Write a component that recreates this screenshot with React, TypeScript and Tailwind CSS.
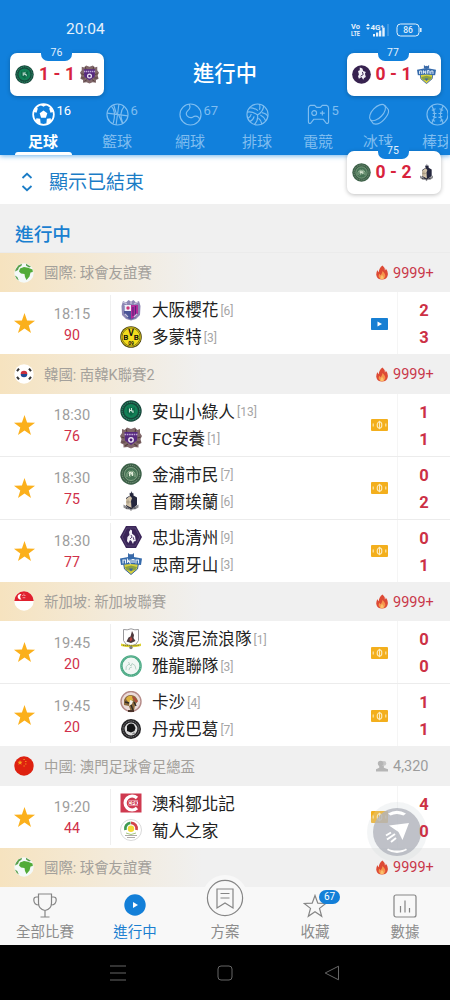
import type { ReactNode } from "react";

// ─── Club crests ──────────────────────────────────────────────────────────────
const CRESTS: Record<string, ReactNode> = {
  cerezo: (
    <>
      <path d="M3 2l3 1.500L8.500 1 11 2.500 13.500 1 16 3.500 19 2l1.500 5-.5 9-4 4-5 1.500L6 20l-4-4-.5-9z" fill="#8d87b4" />
      <path d="M4 7h14v7l-3 5-4 1.500-4-1.500-3-5z" fill="#4b5597" />
      <path d="M11 6h7v8l-3 4-4 2z" fill="#b52c9b" />
      <path d="M13 8v9M15.500 7v9" stroke="#5b237f" strokeWidth="1.200" />
      <rect x="4.500" y="6" width="6.500" height="6" fill="#eef0fa" />
      <circle cx="8" cy="9" r="1.700" fill="#cf3777" />
      <path d="M3 3l4 2M18 3l-4 2M11 2v3M5 15l3 3M17 15l-3 3" stroke="#c9c6dd" strokeWidth="1.200" />
    </>
  ),
  bvb: (
    <>
      <circle cx="11" cy="11" r="10.800" fill="#4a4210" />
      <circle cx="11" cy="11" r="10" fill="#f3dc1d" />
      <circle cx="11" cy="11" r="9" fill="none" stroke="#3b350d" strokeWidth=".6" />
      <text x="5.700" y="13.800" textAnchor="middle" fontSize="8" fontWeight="700" fill="#111">B</text>
      <text x="11" y="9.800" textAnchor="middle" fontSize="8.500" fontWeight="700" fill="#111">V</text>
      <text x="16.300" y="13.800" textAnchor="middle" fontSize="8" fontWeight="700" fill="#111">B</text>
      <text x="11" y="19" textAnchor="middle" fontSize="5" fontWeight="700" fill="#111">09</text>
    </>
  ),
  ansan: (
    <>
      <circle cx="11" cy="11" r="10.700" fill="#17453a" />
      <circle cx="11" cy="11" r="8.900" fill="none" stroke="#2a8a66" strokeWidth="1.200" strokeDasharray="1.500 .7" />
      <circle cx="11" cy="11" r="7" fill="#128056" />
      <path d="M7 7l2.500 1.500L11 6.500l1.500 2L15 7v5.500L11 16l-4-3.500z" fill="#0e6a49" />
      <path d="M9.500 8.500v4M11.500 8v3h1.500v2M9.500 10.500h2" fill="none" stroke="#cfe9dc" strokeWidth="1.100" />
    </>
  ),
  anyang: (
    <>
      <path d="M2 2l3 1 2-2.500 4 1.500 4-1.500L17 3l3-1v4l2 3-1.500 3 1 4-3 1.500v3l-4-.5L11 21.500 7.500 20l-4 .5v-3L.500 16l1-4L0 9l2-3z" fill="#80676a" />
      <path d="M1.500 10l3 1M20.500 10l-3 1M1.500 15l4 0M20.500 15h-4M5 19l3-2M17 19l-3-2M6 2l1 3M16 2l-1 3" stroke="#54403b" strokeWidth="1.100" />
      <path d="M4.500 5h13l-.5 8.500-6 4.500-6-4.500z" fill="#56297f" />
      <path d="M4.500 7.500h13" stroke="#bfa6d8" strokeWidth="1.500" strokeDasharray="1.600 .7" />
      <circle cx="11" cy="12.800" r="2.900" fill="#eee8f4" />
      <path d="M11 11.300l1.500 1-.5 2h-2l-.5-2z" fill="#4d2378" />
    </>
  ),
  gimpo: (
    <>
      <circle cx="11" cy="11" r="10.700" fill="#3c6048" />
      <circle cx="11" cy="11" r="8.700" fill="none" stroke="#88a088" strokeWidth=".9" strokeDasharray="1.200 1" />
      <circle cx="11" cy="11" r="6.500" fill="#467355" stroke="#8fad8f" strokeWidth=".8" />
      <path d="M7 14q-1-4 2-6 2 1 4 0 3 2 2 6M8 10l6 2M14 9.500l-5 5" fill="none" stroke="#a9c3a4" strokeWidth=".8" />
      <path d="M9.500 9v4M9.500 9.500h2v1.500h-2M12.500 9v4" fill="none" stroke="#e2ecda" strokeWidth="1" />
    </>
  ),
  eland: (
    <>
      <path d="M9.500 4l.5-1.500.8 1 .7-2.500.7 2.500.8-1 .5 1.500v1.500L17 7.500V15l-6 5-5-4V8l4-2.500z" fill="#25273d" />
      <path d="M6 9l4-3 2 2-1 3 .5 7-5.500-3z" fill="#d4c5aa" />
      <path d="M8 9.500v5M6 12h5" stroke="#8c7f6c" strokeWidth=".6" />
      <path d="M3.500 14.500l3 1.800 4.500 3 4.500-3 3-1.800v3l-3 1.800-3 .2-1.500 1.500-1.500-1.500-3-.2-3-1.800z" fill="#8d8d90" />
      <path d="M6 18h10" stroke="#34343c" strokeWidth="1.100" strokeDasharray="1.300 .6" />
    </>
  ),
  chungbuk: (
    <>
      <path d="M6 0h10l6 11-6 11H6L0 11z" fill="#3a2558" />
      <path d="M6.800 2h8.400l4.600 9-4.600 9H6.800L2.200 11z" fill="none" stroke="#5c4a78" strokeWidth=".7" />
      <path d="M10.500 3.500l1.500 1v3l3 2.500.8 5-2 .5-.8 2.500-1.500-3-1.500-1-1.500 3-1.500-2 .5-4 2-2-.5-3z" fill="#f4f2f8" />
      <path d="M11 9l1 2-2 2M13 11l1 3" stroke="#3a2558" strokeWidth=".8" fill="none" />
    </>
  ),
  chungbukRound: (
    <>
      <circle cx="11" cy="11" r="10.800" fill="#37224f" />
      <path d="M9 3l3 1 1 3 3 1-1 2 1 4-2 1-1 2-2-3-3 2-1-3 1-2-1-4 2-1z" fill="#f4f2f8" />
      <path d="M12 8l1 3-3 2" stroke="#37224f" strokeWidth="1.100" fill="none" />
    </>
  ),
  asan: (
    <>
      <path d="M8 0l2 1.500 1-.5 1 .5L14 0v4H8z" fill="#3b6aa8" />
      <path d="M3.500 10h15l-1 6-6.500 5.500L4.500 16z" fill="#d9d23c" stroke="#3864a0" strokeWidth="1" />
      <path d="M5 14l6-1.500 6 1.500-1.500 3L11 18l-4.500-1z" fill="#8aa043" />
      <path d="M9 15.500l4 0-2 3z" fill="#3864a0" />
      <path d="M0 5.500L11 3.500l11 2-1 6.500-10-1-10 1z" fill="#356aab" />
      <path d="M3 10.500V7h2.500v3.500M7.500 10V6.500L10 10V6.500M12 10V6.500h2V10M16 10.500V7h2.500v3.500" fill="none" stroke="#e9f1fa" strokeWidth="1.100" />
    </>
  ),
  tampines: (
    <>
      <path d="M3.500 1.500Q7 2.500 11 .8q4 1.700 7.500.7v11q-1 4-7.500 6-6.500-2-7.500-6z" fill="#fff" stroke="#9a9a9d" strokeWidth="1" />
      <path d="M12 3l2 4-.5 3 2 3-4.500 2-4.500-1.500 2-4 2-1z" fill="#4d3a3d" />
      <path d="M11 8.500l1.500 3-2 2-1-2z" fill="#b9453f" />
      <path d="M1 15.500q10 3 20 0V18q-10 2.500-20 0z" fill="#ddd231" />
      <path d="M3 17.300h16" stroke="#6b6722" strokeWidth=".9" strokeDasharray="1.200 .7" />
      <circle cx="11" cy="19.500" r="1.700" fill="#80807a" />
    </>
  ),
  geylang: (
    <>
      <circle cx="11" cy="11" r="9.600" fill="#f1f7f4" stroke="#49a883" strokeWidth="2.400" />
      <circle cx="11" cy="11" r="9.700" fill="none" stroke="#8fd0b5" strokeWidth=".7" strokeDasharray="1 1" />
      <path d="M6 15q-1-4 3-6l2 2 1-2.500q4 1 4 6M9 15q0-3 3-3M8 7.500l2 1" fill="none" stroke="#a9c9bb" strokeWidth=".8" />
    </>
  ),
  hougang: (
    <>
      <circle cx="11" cy="10.500" r="10" fill="#ecdcda" stroke="#b58b88" strokeWidth="1.400" />
      <path d="M4 9q2-5 7-5 5 0 7 6l-3 4-1 6-3 1-2-6-5-1z" fill="#8c6a3c" />
      <path d="M6 8q2-4 6-3l1 4-4 3z" fill="#ddb13f" />
      <path d="M10 9l3 1-1 3-3 2z" fill="#f3efe9" />
      <path d="M5 11l4 1M14 11l2 4M11 14l2 5" stroke="#2f2a26" strokeWidth="1.400" fill="none" />
      <path d="M13 6l4 5" stroke="#b6473c" strokeWidth="1.800" />
      <path d="M8 20h6" stroke="#4a3229" strokeWidth="2" />
    </>
  ),
  tanjong: (
    <>
      <circle cx="11" cy="11" r="10" fill="#232224" />
      <circle cx="11" cy="11" r="8" fill="none" stroke="#7c7c7e" strokeWidth="1" strokeDasharray="1.500 .8" />
      <circle cx="11" cy="11" r="6.400" fill="#dcdcdc" />
      <path d="M7 8q3-4 7-1.500l1.500 3.500-1 3-3.500 1.500L7 13z" fill="#151516" />
      <path d="M12 16l3-1M13.500 14.500l1 2" stroke="#888" strokeWidth="1" />
    </>
  ),
  cpk: (
    <>
      <rect x=".5" y="1.500" width="21" height="19" fill="#cf3a50" />
      <path d="M17 6A7 7 0 1 0 17 16" fill="none" stroke="#fff" strokeWidth="3.200" />
      <path d="M8.500 11h9.500" stroke="#fff" strokeWidth="4.800" />
      <text x="13" y="12.900" textAnchor="middle" fontSize="5" fontWeight="700" fill="#cf3048">CPK</text>
    </>
  ),
  casa: (
    <>
      <circle cx="11" cy="11" r="10.500" fill="#fff" stroke="#cfcfcf" strokeWidth=".8" />
      <path d="M5.500 11A5.700 5.700 0 0 1 10.500 3.800" fill="none" stroke="#3f9a52" strokeWidth="2.800" />
      <path d="M11 3.800a5.700 5.700 0 0 1 5.500 7.200" fill="none" stroke="#d2434a" strokeWidth="2.800" />
      <circle cx="11" cy="9.800" r="3.200" fill="#f2d936" />
      <path d="M6 14q5 3 10 0" fill="none" stroke="#9cc06f" strokeWidth=".9" />
      <path d="M5 16.500h12M7 18.500h8" stroke="#8d8784" strokeWidth=".7" />
    </>
  ),
};

function Crest({ id, className }: { id: string; className: string }) {
  return (
    <svg viewBox="0 0 22 22" className={className}>
      {CRESTS[id]}
    </svg>
  );
}

// ─── Flags ────────────────────────────────────────────────────────────────────
const FLAGS: Record<string, ReactNode> = {
  globe: (
    <>
      <circle cx="10" cy="10" r="9.700" fill="#f4f9f8" />
      <path d="M6 5.500l4-1.500 4 .8 4.500 1.700.3 2.500-2.300.5-1 4-3 3.500-1.500-3-.5-3-3.500-.5-2-2z" fill="#52ab38" />
      <path d="M1.800 6l2.500-3.500L8 .7l-.5 2L5 4.500 4 7 1 8.500zM12 .8l5 3-2 .7-3-2zM.8 12.500l2.500 1.500 1.500 3.500-2-1.500z" fill="#5ba04d" />
    </>
  ),
  korea: (
    <>
      <circle cx="10" cy="10" r="9.700" fill="#fff" />
      <path d="M6.700 10a3.300 3.300 0 0 1 6.600 0z" fill="#c9303e" />
      <path d="M6.700 10a3.300 3.300 0 0 0 6.600 0z" fill="#1f4a94" />
      <path d="M3 7.200l2-2.600M17 7.200l-2-2.600M3 12.800l2 2.600M17 12.800l-2 2.600" stroke="#333" strokeWidth="2" />
    </>
  ),
  singapore: (
    <>
      <circle cx="10" cy="10" r="9.700" fill="#fff" />
      <path d="M.3 10a9.700 9.700 0 0 1 19.400 0z" fill="#e0202d" />
      <path d="M7.500 3.200a2.800 2.800 0 1 0 0 5.200 3.200 3.200 0 0 1 0-5.200z" fill="#fff" />
      <path d="M8.500 4.500h.8M10.500 4.500h.8M9.500 3.200h.8M8.800 6.700h.8M10.400 6.700h.8" stroke="#fff" strokeWidth=".9" />
    </>
  ),
  china: (
    <>
      <circle cx="10" cy="10" r="9.700" fill="#de2110" />
      <path d="M6 4l.7 1.700 1.800.1-1.400 1.200.5 1.800L6 7.800l-1.600 1 .5-1.800-1.400-1.200 1.800-.1z" fill="#f6a21d" />
      <path d="M9.500 3.500h1.200M11.200 5.500h1.200M11.200 8h1.200M9.500 10h1.200" stroke="#f6a21d" strokeWidth="1.100" />
    </>
  ),
};

// ─── Small icons ──────────────────────────────────────────────────────────────
function Flame() {
  return (
    <svg viewBox="0 0 12 15" className="h-[15px] w-3">
      <path d="M6.500.500q2.800 2.500 2.300 5 1-.5 1-2 2.500 3 2 6.500Q11 14.500 6 14.500T.300 10Q0 7.500 1.500 5q.2 1.500 1.200 2.200Q3 3 6.500.500z" fill="#dd4a35" />
      <path d="M6.500 6Q9.800 9 9.300 11.500 8.500 14.300 6 14.300T2.600 11.500Q2.500 10 3.500 8.800q.4 1 1.200 1.400Q6.300 8.500 6.500 6z" fill="#f5954c" />
      <path d="M6 10q2 1.800 1.700 3-.5 1.200-1.700 1.200T4.400 13Q4.500 11.500 6 10z" fill="#fbc06a" />
    </svg>
  );
}

function Viewers() {
  return (
    <svg viewBox="0 0 13 13" className="h-3 w-3 fill-[#b5b5b5]">
      <circle cx="8.500" cy="3.700" r="2.600" opacity=".7" />
      <circle cx="5" cy="3.700" r="3" />
      <path d="M3.500 6h5v2.500L13 10v2.500H0V10l3.500-1.500z" />
    </svg>
  );
}

function Media({ kind }: { kind: "video" | "ticket" }) {
  if (kind === "video") {
    return (
      <svg viewBox="0 0 17 12" className="h-3 w-[17px]">
        <rect width="17" height="12" rx=".8" fill="#177fd3" />
        <path d="M6.500 3.500l4.500 2.500-4.500 2.500z" fill="#fff" />
      </svg>
    );
  }
  return (
    <svg viewBox="0 0 17 12" className="h-3 w-[17px]">
      <rect width="17" height="12" rx="1" fill="#f3af1d" />
      <ellipse cx="8.500" cy="6" rx="2.300" ry="3.200" fill="none" stroke="#fdebbd" strokeWidth="1.100" />
      <path d="M8.500 1.800v8.400" stroke="#fdebbd" strokeWidth="1" />
      <path d="M2.200 4.500v3M14.800 4.500v3" stroke="#fdebbd" strokeWidth="1.100" />
    </svg>
  );
}

// ─── Sport tabs ───────────────────────────────────────────────────────────────
const SPORTS: { label: string; count?: number; width: string; icon: ReactNode }[] = [
  {
    label: "足球", count: 16, width: "w-[86px]",
    icon: (
      <>
        <circle cx="12" cy="12" r="10.800" strokeWidth="1.800" />
        <path d="M12 7.800l4 2.900-1.500 4.700h-5L8 10.700zM8.500 1.800L12 4l3.500-2.200zM1.500 9l3.200 1.200L6 6 5 3.800zM22.500 9l-3.200 1.200L18 6l1-2.200zM4 19.500l.5-3.500 4 .5.5 4.500-1 1zM20 19.500l-.5-3.500-4 .5-.5 4.500 1 1z" fill="currentColor" stroke="none" />
      </>
    ),
  },
  {
    label: "籃球", count: 6, width: "w-[62px]",
    icon: (
      <>
        <circle cx="12" cy="12" r="11" />
        <path d="M13.500 1L10.500 23M1.200 10.500Q12 12 22.800 13.500M5.500 3.300q5.500 5 2 18M19 3.500q-6 7-1.500 17.500M8 1.800l3 10M13 12l4 9" />
      </>
    ),
  },
  {
    label: "網球", count: 67, width: "w-[84px]",
    icon: (
      <>
        <circle cx="12" cy="12" r="11" />
        <path d="M10.500 1.200q2.500 4-1.500 7-2.500 2.500-.5 5.300 2.300 2.500 5.500 1.500 3.500-2.500 6.500 0 1 1 .8 2" />
      </>
    ),
  },
  {
    label: "排球", width: "w-[50px]",
    icon: (
      <>
        <circle cx="12" cy="12" r="11" />
        <path d="M12 12.500Q7 8.500 1.200 9.500M12 12.500Q18 9 18.500 3M12 12.500q1 6-3.500 10.200M12.500 8Q9 5 3.500 5M14 7q1-3 0-5.800M16.500 10q5 1 6.300 4M15 12.500q4 2 5.500 6M8.500 14q-1 4-4.500 5.300M5.500 11.500q-.5 3-3.500 4.500M13 16q3 2 3.500 6" />
      </>
    ),
  },
  {
    label: "電競", count: 5, width: "w-[72px]",
    icon: (
      <>
        <path d="M3.500 2.500H8l2 2h4l2-2h4.500q2 .5 2 3v14q0 2.500-2.500 1.500l-3-4H7l-3 4q-2.500 1-2.500-1.500v-14q0-2.500 2-3z" />
        <circle cx="7.500" cy="10.500" r="2.500" />
        <path d="M13.500 10.500h5M16 8v5" />
      </>
    ),
  },
  {
    label: "冰球", width: "w-[48px]",
    icon: (
      <>
        <ellipse cx="11" cy="10" rx="10.500" ry="5.500" transform="rotate(-46 11 10)" />
        <path d="M3.500 17.300l3 4.200Q12 23.500 18 17T22 6.500L18.300 2.300" />
      </>
    ),
  },
  {
    label: "棒球", width: "w-[70px]",
    icon: (
      <>
        <circle cx="12" cy="12" r="11" />
        <path d="M6 3q6 9 0 18M18 3q-6 9 0 18M6 7.500l4-1.500M7 11h4M7 14l4 1M18 7.500L14 6M17 11h-4M17 14l-4 1M6 17.500l3.500 1.500M18 17.500L14.500 19" />
      </>
    ),
  },
];

function SportTabs() {
  return (
    <div className="flex h-[58px] w-[448px] shrink-0 overflow-x-clip">
      {SPORTS.map((s, i) => (
        <div
          key={s.label}
          className={`flex shrink-0 flex-col items-center ${s.width} ${i === 0 ? "text-white" : "text-[#7fbdf0]"}`}
        >
          <div className="relative mt-[6px]">
            <svg viewBox="0 0 24 24" className="h-[23px] w-[23px] fill-none stroke-current" strokeWidth="1.200">
              {s.icon}
            </svg>
            {s.count && <span className="absolute top-0 left-[25px] text-[13px] leading-4">{s.count}</span>}
          </div>
          <span className={`mt-[7px] text-[15px] leading-[18px] ${i === 0 ? "font-bold" : ""}`}>{s.label}</span>
          {i === 0 && <span className="mt-auto h-[3px] w-[57px] shrink-0 rounded-t-full bg-white" />}
        </div>
      ))}
    </div>
  );
}

// ─── Floating scores ──────────────────────────────────────────────────────────
type FloatingScoreProps = { minute: number; home: string; away: string; score: [number, number]; position: string };
function FloatingScore({ minute, home, away, score, position }: FloatingScoreProps) {
  return (
    <div className={`absolute ${position} flex h-[43px] w-[94px] items-center justify-between rounded-[7px] bg-white px-[5px] shadow-[0_1px_4px_rgba(0,0,0,0.25)]`}>
      <span className="absolute -top-[6px] left-[31px] h-[14px] w-[31px] rounded-b-[7px] bg-[#1180dc] text-center text-[10.500px] leading-3 text-[#e3f1fc]">
        {minute}
      </span>
      <Crest id={home} className="h-[19px] w-[19px]" />
      <div className="flex text-[17.500px] font-bold text-[#d8233c]">
        <span className="w-[13px] text-center">{score[0]}</span>
        <span className="w-[13px] text-center">-</span>
        <span className="w-[13px] text-center">{score[1]}</span>
      </div>
      <Crest id={away} className="h-[19px] w-[19px]" />
    </div>
  );
}

// ─── Matches ──────────────────────────────────────────────────────────────────
type Team = { name: string; rank?: number; crest: string; score: number };
type Match = { time: string; minute: number; media: "video" | "ticket"; teams: [Team, Team] };
type League = { flag: string; name: string; viewers?: string; matches: Match[] };

const LEAGUES: League[] = [
  {
    flag: "globe", name: "國際: 球會友誼賽",
    matches: [
      { time: "18:15", minute: 90, media: "video", teams: [
        { name: "大阪櫻花", rank: 6, crest: "cerezo", score: 2 },
        { name: "多蒙特", rank: 3, crest: "bvb", score: 3 },
      ] },
    ],
  },
  {
    flag: "korea", name: "韓國: 南韓K聯賽2",
    matches: [
      { time: "18:30", minute: 76, media: "ticket", teams: [
        { name: "安山小綠人", rank: 13, crest: "ansan", score: 1 },
        { name: "FC安養", rank: 1, crest: "anyang", score: 1 },
      ] },
      { time: "18:30", minute: 75, media: "ticket", teams: [
        { name: "金浦市民", rank: 7, crest: "gimpo", score: 0 },
        { name: "首爾埃蘭", rank: 6, crest: "eland", score: 2 },
      ] },
      { time: "18:30", minute: 77, media: "ticket", teams: [
        { name: "忠北清州", rank: 9, crest: "chungbuk", score: 0 },
        { name: "忠南牙山", rank: 3, crest: "asan", score: 1 },
      ] },
    ],
  },
  {
    flag: "singapore", name: "新加坡: 新加坡聯賽",
    matches: [
      { time: "19:45", minute: 20, media: "ticket", teams: [
        { name: "淡濱尼流浪隊", rank: 1, crest: "tampines", score: 0 },
        { name: "雅龍聯隊", rank: 3, crest: "geylang", score: 0 },
      ] },
      { time: "19:45", minute: 20, media: "ticket", teams: [
        { name: "卡沙", rank: 4, crest: "hougang", score: 1 },
        { name: "丹戎巴葛", rank: 7, crest: "tanjong", score: 1 },
      ] },
    ],
  },
  {
    flag: "china", name: "中國: 澳門足球會足總盃", viewers: "4,320",
    matches: [
      { time: "19:20", minute: 44, media: "ticket", teams: [
        { name: "澳科鄒北記", crest: "cpk", score: 4 },
        { name: "葡人之家", crest: "casa", score: 0 },
      ] },
    ],
  },
  { flag: "globe", name: "國際: 球會友誼賽", matches: [] },
];

function LeagueHeader({ league }: { league: League }) {
  const hot = !league.viewers;
  return (
    <div className={`flex h-[39.4px] items-center bg-[#f0f0f0] pl-[14px] ${hot ? "bg-linear-to-r from-[#f6e3bf] to-[#f0f0f0] to-45%" : ""}`}>
      <svg viewBox="0 0 20 20" className="h-5 w-5">{FLAGS[league.flag]}</svg>
      <span className="ml-[10px] flex-1 pt-[3px] text-[14.400px] text-[#a3a09b]">{league.name}</span>
      <div className={`relative z-10 flex w-[74px] items-center text-[14.500px] ${hot ? "text-[#c9384a]" : "text-[#9c9c9c]"}`}>
        <span className="w-[17px]">{hot ? <Flame /> : <Viewers />}</span>
        <span className="pt-[2px]">{league.viewers ?? "9999+"}</span>
      </div>
    </div>
  );
}

function MatchRow({ match, last }: { match: Match; last: boolean }) {
  return (
    <div className={`flex bg-white ${last ? "h-[62px]" : "h-[63px] border-b border-[#ececec]"}`}>
      <div className="flex w-12 items-center justify-center pt-px">
        <svg viewBox="0 0 24 24" className="h-[23px] w-[23px] fill-[#fbb01c]">
          <path d="M12 1l2.700 7.800 8.300.2-6.600 5 2.400 8-6.800-4.700L5.200 22l2.400-8L1 9l8.300-.2z" />
        </svg>
      </div>
      <div className="my-[3px] flex w-[63px] flex-col items-center justify-center border-r border-[#efefef] pt-[3px] pr-[14px]">
        <span className="text-[14.600px] leading-[21px] text-[#9d9d9d]">{match.time}</span>
        <span className="text-[14.200px] leading-[21px] text-[#d0304a]">{match.minute}</span>
      </div>
      <div className="flex flex-1 flex-col justify-center pl-[9px]">
        {match.teams.map((t) => (
          <div key={t.name} className="flex h-[27px] items-center">
            <Crest id={t.crest} className="h-[22px] w-[22px]" />
            <span className="ml-[10px] pt-[3px] text-[16.600px] leading-6 text-[#222]">{t.name}</span>
            {t.rank && <span className="ml-[2px] pt-[2px] text-[12px] text-[#a5a5a5]">[{t.rank}]</span>}
          </div>
        ))}
      </div>
      <div className="flex w-[27px] items-center pt-px border-r border-[#f5f5f5]">
        <Media kind={match.media} />
      </div>
      <div className="relative z-10 flex w-[52px] flex-col items-center justify-center pt-[2px] text-[16.500px] font-bold text-[#cc3045]">
        {match.teams.map((t) => (
          <span key={t.name} className="leading-[27px]">{t.score}</span>
        ))}
      </div>
    </div>
  );
}

// ─── Bottom navigation ────────────────────────────────────────────────────────
function BottomNav() {
  return (
    <nav className="relative flex h-[58px] shrink-0 bg-[#f8f8f8] text-[14.500px] leading-5 text-[#8c8c8c]">
      <div className="flex flex-1 flex-col items-center justify-end pb-[2px]">
        <svg viewBox="0 0 24 25" className="mb-[5px] h-[25px] w-6 fill-none stroke-[#858585]" strokeWidth="1.200">
          <path d="M5.500 1h13v9q0 6-6.500 7.500Q5.500 16 5.500 10zM5.500 4H3.500Q.700 4 .800 7q.2 5 5.200 5M18.500 4h2q2.800 0 2.700 3-.2 5-5.200 5M12 17.500v6M7.500 24h9" />
        </svg>
        全部比賽
      </div>
      <div className="flex flex-1 flex-col items-center justify-end pb-[2px] text-[#1b7fd0]">
        <svg viewBox="0 0 22 22" className="mb-[7px] h-[22px] w-[22px]">
          <circle cx="11" cy="11" r="10.700" fill="#137fd8" />
          <path d="M9 8l5 3-5 3z" fill="#fff" />
        </svg>
        進行中
      </div>
      <div className="flex flex-1 flex-col items-center justify-end pb-[2px]">
        <div className="absolute -top-3 flex h-[46px] w-[46px] items-center justify-center rounded-full bg-[#f8f8f8]">
          <svg viewBox="0 0 38 38" className="h-[38px] w-[38px] fill-none stroke-[#858585]" strokeWidth="1.200">
            <circle cx="19" cy="19" r="17.600" />
            <path d="M11 10h16v19l-8-5-8 5zM14.500 14.500h9M14.500 19h9" />
          </svg>
        </div>
        方案
      </div>
      <div className="flex flex-1 flex-col items-center justify-end pb-[2px]">
        <div className="relative mb-[5px]">
          <svg viewBox="0 0 24 24" className="h-6 w-6 fill-none stroke-[#858585]" strokeWidth="1.200">
            <path d="M12 1.500l2.800 7.700 8 .3-6.300 4.900 2.200 7.900-6.700-4.500-6.700 4.500 2.200-7.900-6.300-4.900 8-.3z" />
          </svg>
          <span className="absolute -top-1 left-4 h-[14px] w-[21px] rounded-full bg-[#137fd8] text-center text-[10px] leading-[14px] text-white">67</span>
        </div>
        收藏
      </div>
      <div className="flex flex-1 flex-col items-center justify-end pb-[2px]">
        <svg viewBox="0 0 24 24" className="mb-[5px] h-6 w-6 fill-none stroke-[#858585]" strokeWidth="1.200">
          <rect x="1" y="1" width="22" height="22" rx="2" />
          <path d="M7.500 12v6.500M12 6.500v12M16.500 14v4.500" />
        </svg>
        數據
      </div>
    </nav>
  );
}

function SystemNav() {
  return (
    <div className="flex h-[55px] shrink-0 items-center justify-center gap-[91px] bg-black">
      <svg viewBox="0 0 16 16" className="h-4 w-4 fill-none stroke-[#666]" strokeWidth="1">
        <path d="M0 1h16M0 8h16M0 15h16" />
      </svg>
      <svg viewBox="0 0 16 16" className="h-4 w-4 fill-none stroke-[#666]" strokeWidth="1">
        <rect x="1" y="1" width="14" height="14" rx="3" />
      </svg>
      <svg viewBox="0 0 16 16" className="h-4 w-4 fill-none stroke-[#666]" strokeWidth="1" strokeLinejoin="round">
        <path d="M14.500 1.200v13.600L1.200 8z" />
      </svg>
    </div>
  );
}

function StatusBar() {
  return (
    <div className="flex h-11 shrink-0 items-end justify-between pl-[66px] pr-[28px] pb-[5px]">
      <span className="text-[15.500px] leading-[19px] text-[#e5f1fb]">20:04</span>
      <svg viewBox="0 0 72 16" className="mb-px h-4 w-[72px] fill-none stroke-[#e5f1fb]">
        <g fill="#e5f1fb" stroke="none" fontWeight="700">
          <text x="1" y="7" fontSize="7.500">Vo</text>
          <text x="1" y="14" fontSize="7.500" textLength="9" lengthAdjust="spacingAndGlyphs">LTE</text>
          <text x="20.500" y="7.500" fontSize="8">4G</text>
          <text x="30.500" y="5.500" fontSize="6">+</text>
          <path d="M16 4l2-2.500L20 4zM16 5.500h4L18 8zM23 12h2v2.500h-2zM26 10.500h2.300v4H26zM29 8.500h2.300v6H29zM32.300 5.500h2.400v9h-2.400z" />
          <text x="58" y="11" fontSize="8.500" fontWeight="500" textAnchor="middle">86</text>
        </g>
        <path d="M38 2v12" opacity=".4" />
        <rect x="47" y="2" width="22" height="12" rx="3.500" />
        <path d="M70.800 6v4" strokeWidth="1.500" />
      </svg>
    </div>
  );
}

// ─── Page ─────────────────────────────────────────────────────────────────────
export default function App() {
  return (
    <div className='relative flex h-[1000px] w-[450px] flex-col overflow-hidden bg-[#f0f0f0] font-["Roboto","Noto_Sans_CJK_TC",sans-serif]'>
      <header className="z-10 flex h-[155px] shrink-0 flex-col bg-[#1180dc] shadow-[0_1px_5px_rgba(17,128,220,0.6)]">
        <StatusBar />
        <h1 className="flex h-[53px] items-center justify-center pt-[7px] text-[21.300px] font-medium text-white">進行中</h1>
        <SportTabs />
      </header>

      <div className="flex h-[49px] shrink-0 items-center bg-white pt-1 pl-[21px] text-[#1a7cc6]">
        <svg viewBox="0 0 12 20" className="h-5 w-3 fill-none stroke-current" strokeWidth="1.800">
          <path d="M1.500 6L6 1.800 10.500 6M1.500 14L6 18.200l4.500-4.200" />
        </svg>
        <span className="ml-4 pt-[3px] text-[19px]">顯示已結束</span>
      </div>

      <h2 className="flex h-[49px] shrink-0 items-center border-b border-[#ebebeb] pt-[15px] pl-[15px] text-[18.700px] font-medium text-[#1a80d0]">進行中</h2>

      <main className="min-h-0 flex-1">
        {LEAGUES.map((league, i) => (
          <section key={i}>
            <LeagueHeader league={league} />
            {league.matches.map((m, j) => (
              <MatchRow key={m.teams[0].name} match={m} last={j === league.matches.length - 1} />
            ))}
          </section>
        ))}
      </main>

      <BottomNav />
      <SystemNav />

      <svg viewBox="0 0 60 60" className="absolute top-[802px] left-[367px] z-[5] h-[60px] w-[60px] opacity-85">
        <circle cx="30" cy="30" r="30" fill="#d5d9de" opacity=".3" />
        <circle cx="30" cy="30" r="24" fill="#b4b7bf" />
        <path d="M21 11.500q9-5.500 18 0l-2.500 2q-7-3-13 0zM21 46.500q3 2 9 2t9-2l1 1.500q-10 6-20 0z" fill="#fff" />
        <path d="M22 23.500L42 21l-6.500 17-4-8z" fill="#fff" />
        <path d="M19 33.500l5-3M20 37.500l8-5.500M24 40l5-4" stroke="#fff" strokeWidth="2" />
      </svg>

      <div className="z-20">
        <FloatingScore minute={76} home="ansan" away="anyang" score={[1, 1]} position="top-[53px] left-[10px]" />
        <FloatingScore minute={77} home="chungbukRound" away="asan" score={[0, 1]} position="top-[53px] left-[346.5px]" />
        <FloatingScore minute={75} home="gimpo" away="eland" score={[0, 2]} position="top-[151px] left-[346.5px]" />
      </div>
    </div>
  );
}
